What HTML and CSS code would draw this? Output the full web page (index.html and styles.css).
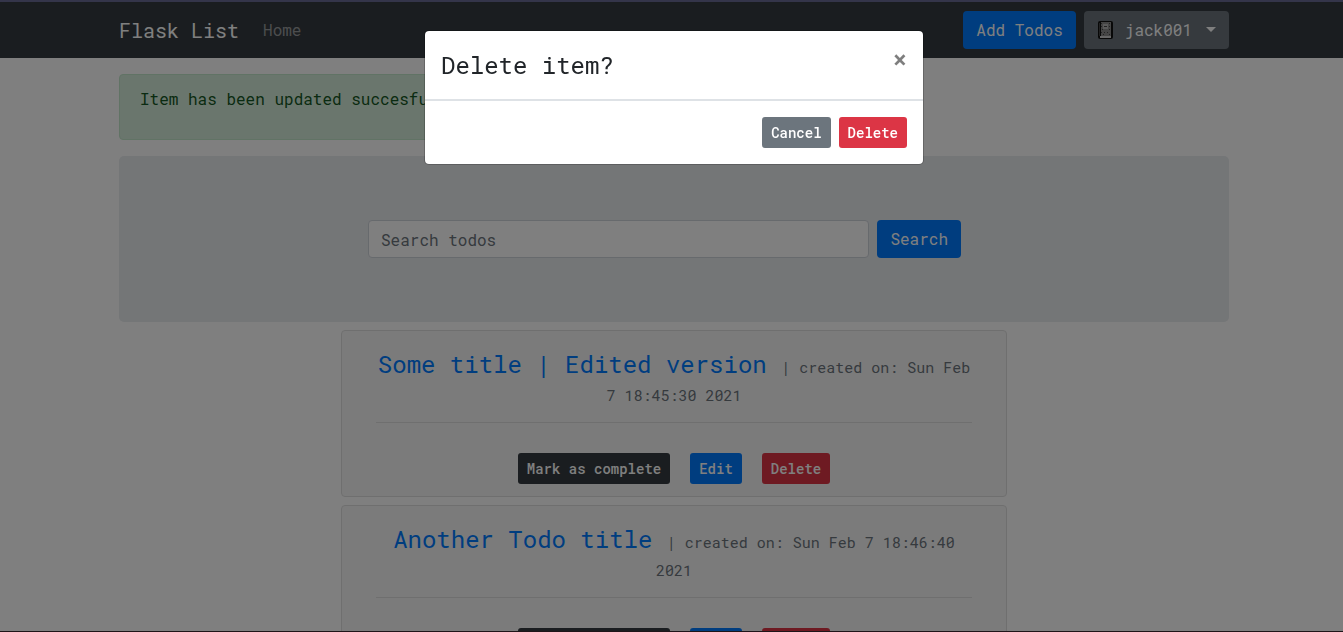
FILE: index.html
```html
<!DOCTYPE html>
<html lang="en">
<head>
<meta charset="utf-8">
<title>Flask List</title>
<link rel="stylesheet" href="styles.css">
</head>
<body>
<div class="page">
  <nav class="navbar">
    <div class="container navbar-inner">
      <a class="brand" href="#">Flask List</a>
      <a class="nav-link" href="#">Home</a>
      <div class="nav-actions">
        <button class="btn btn-primary" type="button">Add Todos</button>
        <button class="btn btn-secondary user-menu" type="button">
          <svg class="book" viewBox="0 0 16 18" aria-hidden="true">
            <rect x="1" y="0" width="15" height="18" rx="2" fill="#111"/>
            <path d="M4 1h10v14H4z" fill="#8a8a8a"/>
            <path d="M4 2.500h1M12 2.500h1M4 5.500h1M12 5.500h1M5 8.500h1M12 8.500h1M4 11.500h1M7 11.500h1M10 11.500h1M12 13.500h1M6 13.500h1" stroke="#444"/>
            <path d="M6 3h5v5H6z" fill="#b4b4b4"/>
            <path d="M7 5.500h3" stroke="#444"/>
            <path d="M3 15h11v2H3z" fill="#ccc"/>
            <path d="M2.500 2v13" stroke="#444"/>
          </svg>
          <span>jack001</span>
          <span class="caret"></span>
        </button>
      </div>
    </div>
  </nav>

  <main class="content">
    <div class="container">
      <div class="alert" role="alert"><p>Item has been updated succesfully</p></div>

      <section class="jumbotron">
        <form class="search">
          <input class="search-input" type="search" placeholder="Search todos" aria-label="Search todos">
          <button class="btn btn-primary" type="button">Search</button>
        </form>
      </section>

      <article class="card">
        <h4 class="card-title"><a href="#">Some title | Edited version</a> <small>| created on: Sun Feb 7 18:45:30 2021</small></h4>
        <hr>
        <div class="card-actions">
          <button class="btn btn-sm btn-dark" type="button">Mark as complete</button>
          <button class="btn btn-sm btn-primary" type="button">Edit</button>
          <button class="btn btn-sm btn-danger" type="button">Delete</button>
        </div>
      </article>

      <article class="card">
        <h4 class="card-title"><a href="#">Another Todo title</a> <small>| created on: Sun Feb 7 18:46:40 2021</small></h4>
        <hr>
        <div class="card-actions">
          <button class="btn btn-sm btn-dark" type="button">Mark as complete</button>
          <button class="btn btn-sm btn-primary" type="button">Edit</button>
          <button class="btn btn-sm btn-danger" type="button">Delete</button>
        </div>
      </article>
    </div>
  </main>
</div>

<div class="backdrop">
  <div class="modal" role="dialog" aria-labelledby="modal-title">
    <div class="modal-header">
      <h4 id="modal-title" class="modal-title">Delete item?</h4>
      <button class="close" type="button" aria-label="Close">×</button>
    </div>
    <div class="modal-footer">
      <button class="btn btn-sm btn-secondary" type="button">Cancel</button>
      <button class="btn btn-sm btn-danger" type="button">Delete</button>
    </div>
  </div>
</div>
</body>
</html>
```
FILE: styles.css
```css
* { box-sizing: border-box; }

body {
  margin: 0;
  height: 100vh;
  overflow: hidden;
  background: #fff;
  color: #212529;
  font: 400 16px/24px "Roboto Mono", "Liberation Mono", monospace;
}

a { color: #007bff; text-decoration: none; }

.page { padding-top: 2px; }

.navbar {
  padding: 9px 0 9px 5px;
  background: #343a40;
}

.content { padding-left: 5px; }

.container {
  max-width: 1110px;
  margin: 0 auto;
}

.navbar-inner { display: flex; align-items: center; }

.brand { margin-right: 24px; color: #fff; font-size: 20px; line-height: 30px; }

.nav-link { color: rgba(255, 255, 255, .5); }

.nav-actions { display: flex; gap: 8px; margin-left: auto; }

.btn {
  padding: 6px 12px;
  border: 1px solid transparent;
  border-radius: 4px;
  color: #fff;
  font: inherit;
  white-space: nowrap;
}

.btn-sm {
  padding: 4px 8px;
  border-radius: 3px;
  font-size: 14px;
  line-height: 21px;
  font-weight: 500;
}

.btn-primary { background: #007bff; }
.btn-secondary { background: #6c757d; }
.btn-danger { background: #dc3545; }
.btn-dark { background: #343a40; }

.user-menu { display: flex; align-items: center; }

.book { width: 16px; height: 18px; margin-right: 12px; }

.caret {
  margin: 0 0 2px 14px;
  border-top: 5px solid #fff;
  border-left: 5px solid transparent;
  border-right: 5px solid transparent;
}

.alert {
  width: 60%;
  margin: 16px 0;
  padding: 12px 20px;
  border: 1px solid #c3e6cb;
  border-radius: 4px;
  background: #d4edda;
  color: #155724;
}

.alert p { margin: 0 0 16px; }

.jumbotron {
  padding: 64px 32px;
  border-radius: 5px;
  background: #e9ecef;
}

.search {
  display: flex;
  gap: 8px;
  max-width: 612px;
  margin: 0 auto;
  padding-right: 19px;
}

.search-input {
  flex: 1;
  min-width: 0;
  height: 38px;
  padding: 6px 12px;
  border: 1px solid #ced4da;
  border-radius: 4px;
  background: #fff;
  font: inherit;
}

.search-input::placeholder { color: #6c757d; opacity: 1; }

.card {
  width: 60%;
  margin: 8px auto 0;
  padding: 19px 34px 12px;
  border: 1px solid #dfdfdf;
  border-radius: 4px;
  background: #f7f7f7;
  text-align: center;
}

.card-title { margin: 0; font-size: 24px; line-height: 28px; font-weight: 400; }

.card-title small { color: #6c757d; font-size: 15px; line-height: 18px; }

hr { margin: 16px 0 30px; border: 0; border-top: 1px solid #dfdfdf; }

.card-actions { display: flex; justify-content: center; gap: 20px; }

.backdrop {
  position: fixed;
  inset: 0;
  padding: 28px 0 0 5px;
  border-top: 2px solid #34354a;
  border-bottom: 1px solid #1e1519;
  background: rgba(0, 0, 0, .5);
  background-clip: padding-box;
}

.modal {
  max-width: 500px;
  margin: 0 auto;
  border: 1px solid rgba(0, 0, 0, .2);
  border-radius: 5px;
  background: #fff;
  background-clip: padding-box;
}

.modal-header {
  display: flex;
  justify-content: space-between;
  align-items: flex-start;
  padding: 16px;
  border-bottom: 2px solid #dee2e6;
}

.modal-title { margin: 0; font-size: 24px; line-height: 36px; font-weight: 400; }

.close {
  padding: 0;
  border: 0;
  background: none;
  color: #000;
  font: 700 24px/24px "Roboto Mono", "Liberation Mono", monospace;
  opacity: .5;
}

.modal-footer {
  display: flex;
  justify-content: flex-end;
  gap: 8px;
  padding: 16px;
}
```
